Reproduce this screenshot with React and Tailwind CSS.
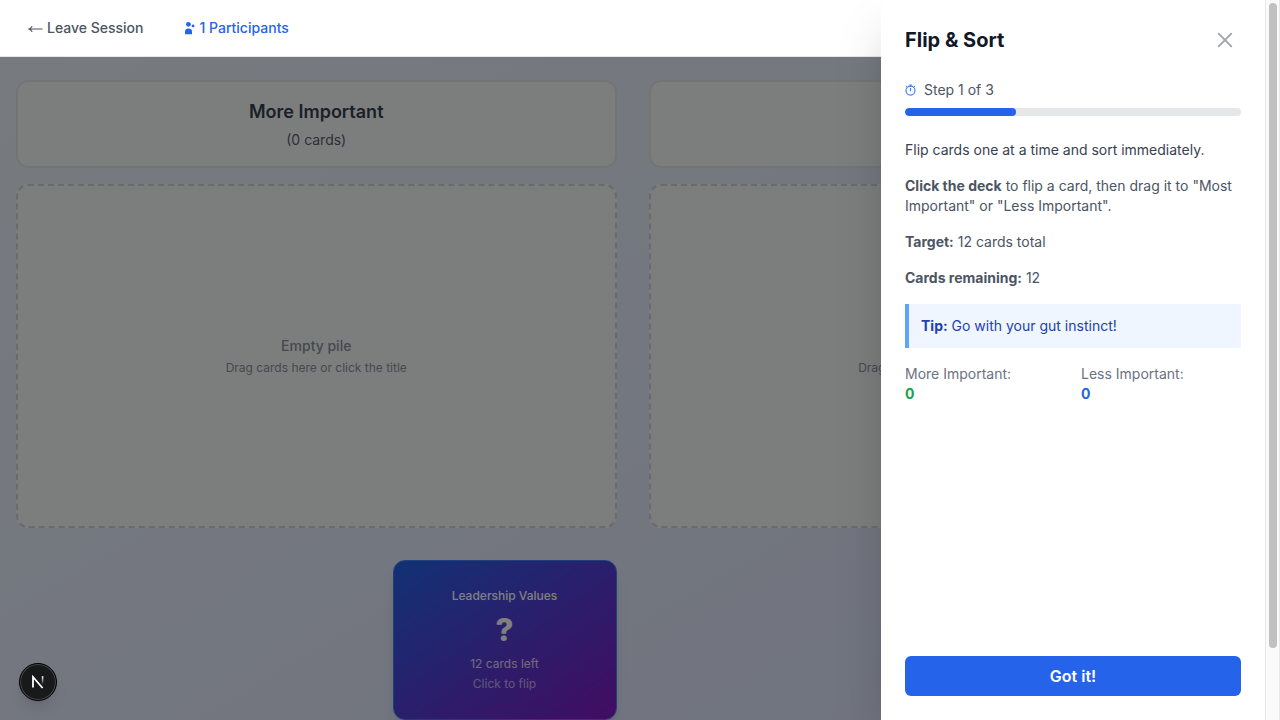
function Pile({ title }) {
  return (
    <section className="flex flex-col gap-4">
      <div className="flex h-[88px] flex-col items-center rounded-xl border-2 border-[#e6e9e6] bg-[#f9fdfa] pt-4">
        <h2 className="text-lg leading-7 font-semibold text-[#374151]">{title}</h2>
        <p className="mt-1 text-sm leading-5 text-[#586170]">(0 cards)</p>
      </div>
      <div className="flex h-[344px] flex-col items-center justify-center rounded-xl border-2 border-dashed border-[#d1d5db] bg-[#f9fdfa] text-[#8a919e]">
        <p className="text-sm leading-6 font-medium">Empty pile</p>
        <p className="text-xs leading-5">Drag cards here or click the title</p>
      </div>
    </section>
  );
}

function Deck() {
  return (
    <div className="flex h-40 w-56 flex-col items-center rounded-xl border border-[#3b82f6] bg-linear-to-br/srgb from-[#2563eb] to-[#8419c4] pt-[25px] text-xs leading-5 text-white shadow-lg">
      <span className="font-medium">Leadership Values</span>
      <span className="mt-1 text-[31px] leading-10 font-extrabold">?</span>
      <span className="mt-1 opacity-80">12 cards left</span>
      <span className="opacity-60">Click to flip</span>
    </div>
  );
}

function ArrowLeft() {
  return (
    <svg className="mt-[2px] h-2 w-[15px]" viewBox="0 0 15 8" fill="none" stroke="currentColor" strokeWidth="1.1">
      <path d="M1 4h13.5M4.2 1.3Q3 3.3 1 4Q3 4.7 4.2 6.7" />
    </svg>
  );
}

function PeopleIcon() {
  return (
    <svg className="h-3.5 w-3" viewBox="0 0 12 14" fill="currentColor">
      <circle cx="4.4" cy="3.3" r="2.4" />
      <circle cx="9.1" cy="4.9" r="1.4" />
      <path d="M1 13.2v-2.4q0-3.2 3.5-3.2t3.5 3.2v2.4z" />
    </svg>
  );
}

function Timer() {
  return (
    <svg className="h-3 w-[11px] text-[#3b82f6]" viewBox="0 0 11 12" fill="none" stroke="currentColor">
      <circle cx="5.5" cy="6.6" r="4.5" strokeWidth="1.15" />
      <path d="M4.2 1h2.6M5.5 1v1.4M5.5 4v3.2M1.2 2.9l.8-.8M9.8 2.9l-.8-.8" strokeWidth="1.2" />
    </svg>
  );
}

function Drawer() {
  return (
    <aside className="absolute inset-y-0 right-0 z-20 flex w-96 flex-col bg-white p-6 text-sm leading-5 text-[#4b5563] shadow-2xl">
      <div className="flex h-8 items-center justify-between">
        <h1 className="text-xl font-bold text-[#111827]">Flip &amp; Sort</h1>
        <svg className="mr-2 h-4 w-4 text-[#9ca3af]" viewBox="0 0 16 16" fill="none" stroke="currentColor" strokeWidth="1.8" strokeLinecap="round">
          <path d="M1.7 1.7l12.6 12.6M14.3 1.7L1.7 14.3" />
        </svg>
      </div>
      <div className="mt-6 flex items-center gap-2">
        <Timer />
        <span>Step 1 of 3</span>
      </div>
      <div className="mt-2 h-2 shrink-0 overflow-hidden rounded-full bg-[#e5e7eb]">
        <div className="h-2 w-[33%] rounded-full bg-[#2563eb]" />
      </div>
      <div className="mt-6 flex flex-col gap-4">
        <p className="text-[#374151]">Flip cards one at a time and sort immediately.</p>
        <p>
          <strong>Click the deck</strong> to flip a card, then drag it to "Most Important" or "Less Important".
        </p>
        <p><strong>Target:</strong> 12 cards total</p>
        <p><strong>Cards remaining:</strong> 12</p>
        <p className="border-l-4 border-[#60a5fa] bg-[#eff6ff] p-3 text-[#1e40af]">
          <strong>Tip:</strong> Go with your gut instinct!
        </p>
        <div className="grid grid-cols-2 gap-4 text-[#6b7280]">
          <div>
            <p>More Important:</p>
            <p className="font-bold text-[#16a34a]">0</p>
          </div>
          <div>
            <p>Less Important:</p>
            <p className="font-bold text-[#2563eb]">0</p>
          </div>
        </div>
      </div>
      <button className="mt-auto h-10 rounded-md bg-[#2563eb] text-base font-semibold text-white">Got it!</button>
    </aside>
  );
}

export default function App() {
  return (
    <div className="flex h-[720px] w-[1280px] overflow-hidden bg-white font-['Inter',sans-serif]">
      <div className="relative flex w-[1265px] flex-col overflow-hidden bg-linear-to-br from-[#eff6ff] to-[#e0e7ff]">
        <header className="z-10 flex h-[57px] shrink-0 items-center gap-10 border-b border-[#e5e7eb] bg-white pl-7 text-sm leading-5 font-medium">
          <span className="flex items-center gap-1 text-[#4b5563]">
            <ArrowLeft />
            Leave Session
          </span>
          <span className="flex items-center gap-1 text-[#2563eb]">
            <PeopleIcon />
            1 Participants
          </span>
        </header>
        <main className="px-4 pt-[23px]">
          <div className="grid grid-cols-2 gap-8">
            <Pile title="More Important" />
            <Pile title="Less Important" />
          </div>
          <div className="mt-8 flex justify-center gap-8">
            <Deck />
            <div className="w-56" />
          </div>
        </main>
        <div className="absolute inset-0 bg-black/50" />
        <Drawer />
        <div className="absolute bottom-[19px] left-[19px] z-20 flex h-[38px] w-[38px] items-center justify-center rounded-full border border-black bg-[#18191b] shadow-lg ring-1 ring-[#4a4a4a] ring-inset">
          <svg className="h-[14px] w-3" viewBox="0 0 12 14" fill="none" strokeWidth="1.8">
            <defs>
              <linearGradient id="stem" x1="0" y1="0" x2="0" y2="1">
                <stop offset="0" stopColor="white" />
                <stop offset="1" stopColor="white" stopOpacity="0" />
              </linearGradient>
            </defs>
            <path d="M1 12.5V2L10.6 13" stroke="white" />
            <rect x="9.8" y="1.2" width="1.6" height="8.5" fill="url(#stem)" />
          </svg>
        </div>
      </div>
      <div className="w-[15px] border-x border-x-[#e8e8e8] bg-[#fafafa] pt-[3px] pl-[3px]">
        <div className="h-[645px] w-2 rounded-full bg-[#c1c1c1]" />
      </div>
    </div>
  );
}
